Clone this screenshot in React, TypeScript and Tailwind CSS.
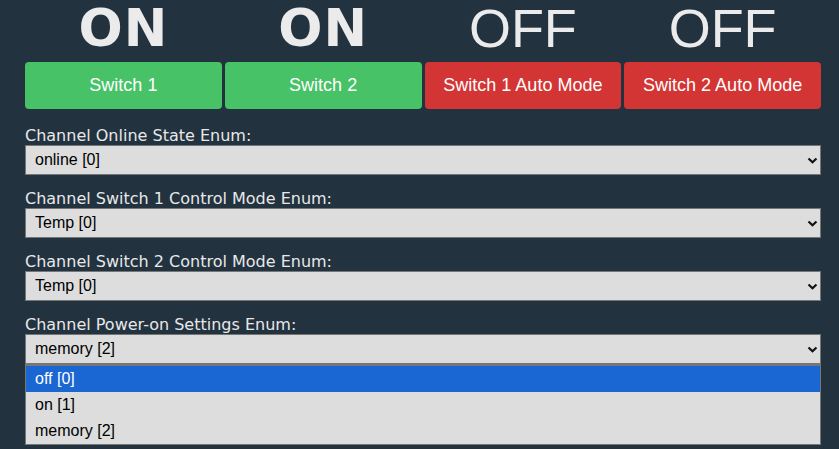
const states = [
  { text: "ON", bold: true },
  { text: "ON", bold: true },
  { text: "OFF", bold: false },
  { text: "OFF", bold: false },
];

const buttons = [
  { label: "Switch 1", on: true },
  { label: "Switch 2", on: true },
  { label: "Switch 1 Auto Mode", on: false },
  { label: "Switch 2 Auto Mode", on: false },
];

const selects = [
  { label: "Channel Online State Enum:", value: "online [0]" },
  { label: "Channel Switch 1 Control Mode Enum:", value: "Temp [0]" },
  { label: "Channel Switch 2 Control Mode Enum:", value: "Temp [0]" },
  { label: "Channel Power-on Settings Enum:", value: "memory [2]", open: true },
];

const powerOptions = ["off [0]", "on [1]", "memory [2]"];

function Chevron() {
  return (
    <svg width="11" height="7" viewBox="0 0 11 7">
      <path d="M1.5 1.5l4 3.8 4-3.8" fill="none" stroke="#111" strokeWidth="2.2" />
    </svg>
  );
}

function FakeSelect({ value, open }: { value: string; open?: boolean }) {
  return (
    <div className="relative">
      <div className="flex h-[30px] items-center justify-between border border-[#767676] bg-[#dddddd] pl-[9px] pr-[2px] font-['Liberation_Sans',Arial,sans-serif] text-[16px] text-black">
        <span>{value}</span>
        <Chevron />
      </div>
      {open && (
        <div className="absolute left-0 right-0 top-[30px] border border-t-2 border-[#767676] bg-[#dddddd] font-['Liberation_Sans',Arial,sans-serif] text-[16px] text-black">
          {powerOptions.map((opt, i) => (
            <div
              key={opt}
              className={
                i === 0
                  ? "flex h-[26px] items-center bg-[#1a67d3] pl-[9px] text-white"
                  : "flex h-[26px] items-center pl-[9px]"
              }
            >
              {opt}
            </div>
          ))}
        </div>
      )}
    </div>
  );
}

export default function App() {
  return (
    <div className="h-[449px] w-[839px] overflow-hidden bg-[#22323f]">
      <div className="ml-[25px] w-[796px] pt-px">
        <div className="-mt-[3px] flex gap-[3px]">
          {states.map((s, i) => (
            <div
              key={i}
              className={
                s.bold
                  ? "h-[64px] flex-1 text-center font-['DejaVu_Sans',Verdana,sans-serif] text-[52px] font-bold leading-[61px] tracking-[1px] text-[#ebebeb]"
                  : "h-[64px] flex-1 text-center font-['Liberation_Sans',Arial,sans-serif] text-[54px] leading-[61px] text-[#ebebeb]"
              }
            >
              {s.text}
            </div>
          ))}
        </div>
        <div className="flex gap-[3px]">
          {buttons.map((b) => (
            <div
              key={b.label}
              className={
                b.on
                  ? "flex h-[47px] flex-1 items-center justify-center rounded-[4px] bg-[#47c266] font-['Liberation_Sans',Arial,sans-serif] text-[18px] text-white"
                  : "flex h-[47px] flex-1 items-center justify-center rounded-[4px] bg-[#d33535] font-['Liberation_Sans',Arial,sans-serif] text-[18px] text-white"
              }
            >
              {b.label}
            </div>
          ))}
        </div>
        <div className="pt-[18px]">
          {selects.map((s, i) => (
            <div key={s.label} className={i === 0 ? "" : "mt-[15px]"}>
              <div className="h-[18px] font-['DejaVu_Sans',Verdana,sans-serif] text-[16px] leading-[18px] text-[#e8e8e8]">
                {s.label}
              </div>
              <FakeSelect value={s.value} open={s.open} />
            </div>
          ))}
        </div>
      </div>
    </div>
  );
}
